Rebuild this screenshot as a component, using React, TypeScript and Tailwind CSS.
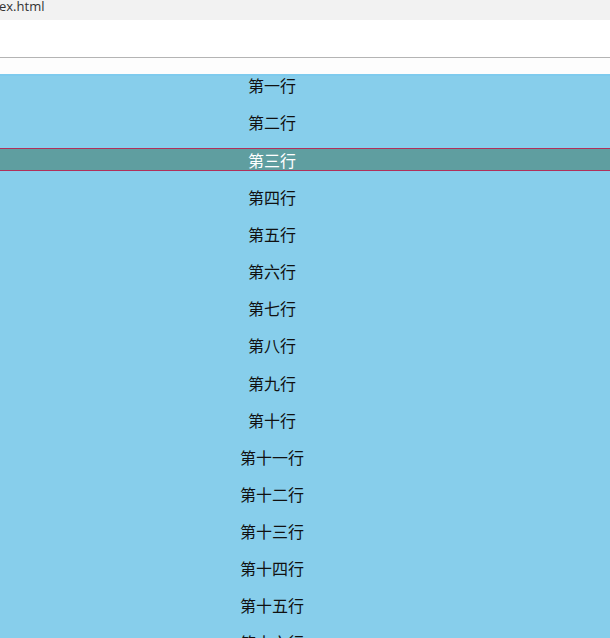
const rows = [
  "第一行", "第二行", "第三行", "第四行", "第五行", "第六行", "第七行", "第八行",
  "第九行", "第十行", "第十一行", "第十二行", "第十三行", "第十四行", "第十五行", "第十六行",
]

export default function App() {
  const selected = 2

  return (
    <div className="h-[638px] w-[610px] overflow-hidden bg-white font-['Noto_Sans_CJK_SC',sans-serif]">
      {/* tab strip, cut off on the left */}
      <div className="h-[20px] bg-[#f2f2f2] text-[13px] leading-[13px] text-[#333] font-['Open_Sans','Noto_Sans',sans-serif] -ml-[1px]">
        ex.html
      </div>
      <div className="h-[38px] bg-white border-b border-[#b4b4b4]" />
      <div className="h-[16px] bg-[#fdfdfd]" />

      <ul className="flex flex-col gap-[14.14px] bg-[#87ceeb] shadow-[inset_0_2px_0_#7ecbee]">
        {rows.map((r, i) => (
          <li
            key={r}
            className={
              i === selected
                ? "h-[23px] flex items-center justify-center pr-[66px] bg-[#5f9ea0] border-y border-[#b0305a] text-white text-[16px]"
                : i < selected
                  ? "h-[23px] flex items-center justify-center pr-[66px] text-[#111] text-[16px] -translate-y-[1.5px]"
                  : "h-[23px] flex items-center justify-center pr-[66px] text-[#111] text-[16px]"
            }
          >
            {r}
          </li>
        ))}
      </ul>
    </div>
  )
}
